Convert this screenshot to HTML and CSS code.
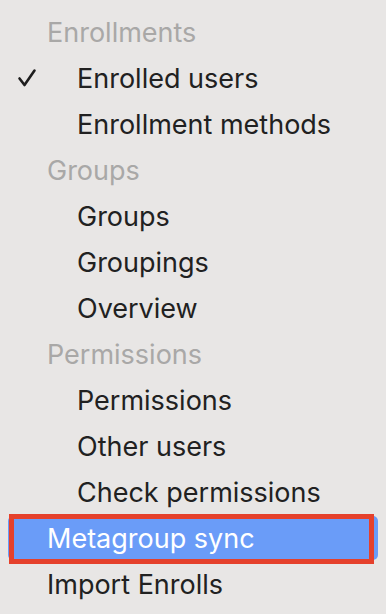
FILE: index.html
```html
<!DOCTYPE html>
<html>
<head>
<meta charset="utf-8">
<link rel="stylesheet" href="styles.css">
</head>
<body>
<ul class="menu">
  <li class="row header">Enrollments</li>
  <li class="row item"><span class="check"><svg width="20" height="20" viewBox="0 0 20 20"><path d="M2.5 10.5 L7.5 17 L17.5 2.5" fill="none" stroke="#1e1e1e" stroke-width="2.6" stroke-linecap="round" stroke-linejoin="round"/></svg></span>Enrolled users</li>
  <li class="row item">Enrollment methods</li>
  <li class="row header">Groups</li>
  <li class="row item">Groups</li>
  <li class="row item">Groupings</li>
  <li class="row item">Overview</li>
  <li class="row header">Permissions</li>
  <li class="row item">Permissions</li>
  <li class="row item">Other users</li>
  <li class="row item">Check permissions</li>
  <li class="row top selected">Metagroup sync</li>
  <li class="row top">Import Enrolls</li>
</ul>
</body>
</html>
```
FILE: styles.css
```css
html, body {
  margin: 0;
  padding: 0;
  background: #e8e6e5;
}
body {
  font-family: "Inter", "Noto Sans", sans-serif;
  font-size: 27px;
  color: #212121;
}
.menu {
  list-style: none;
  margin: 0;
  padding: 9px 0 0 0;
}
.row {
  position: relative;
  display: flex;
  align-items: center;
  height: 46px;
  margin: 0 8px;
  box-sizing: border-box;
  white-space: nowrap;
}
.header {
  padding-left: 39px;
  color: #a9a8a7;
}
.top {
  padding-left: 39px;
}
.item {
  padding-left: 69px;
}
.check {
  position: absolute;
  left: 9px;
  top: 13px;
  width: 20px;
  height: 20px;
}
.check svg {
  display: block;
}
.selected {
  background: #6a9cf8;
  color: #ffffff;
  border-radius: 5px;
  height: 44px;
  margin-top: 1px;
  margin-bottom: 1px;
}
.selected::after {
  content: "";
  position: absolute;
  left: 1px;
  top: -2px;
  right: 4px;
  bottom: -4px;
  border: 5px solid #e5412c;
}
```
